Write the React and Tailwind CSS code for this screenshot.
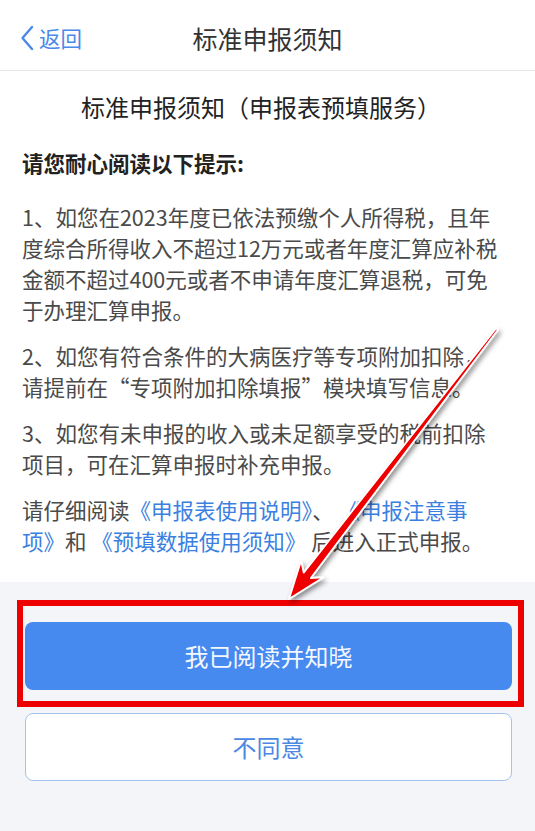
import React from 'react';

const cjk = { fontFamily: '"Noto Sans CJK SC", "Noto Sans", sans-serif' };

const Link = ({ children }) => <span className="text-[#3b80e0]">{children}</span>;

// red annotation arrow drawn over the page
const Arrow = () => (
  <svg
    className="absolute left-0 top-0 pointer-events-none"
    width="535"
    height="831"
    viewBox="0 0 535 831"
  >
    <defs>
      <filter id="shadow" x="-20%" y="-20%" width="140%" height="140%">
        <feDropShadow dx="2" dy="3" stdDeviation="2.5" floodColor="#000" floodOpacity="0.45" />
      </filter>
    </defs>
    <polygon
      points="289,599 323.3,577.4 310.9,578 498,329.7 496.1,328.3 303.7,572.6 301.1,560.4"
      fill="#ee0000"
      stroke="#ffffff"
      strokeWidth="1.8"
      strokeLinejoin="round"
      filter="url(#shadow)"
    />
  </svg>
);

export default function App() {
  return (
    <div className="relative w-[535px] min-h-screen flex flex-col bg-white" style={cjk}>
      {/* header */}
      <div className="grid grid-cols-[1fr_auto_1fr] items-center h-[71px] border-b border-[#e6e6e6] pt-[6px]">
        <div className="flex items-center pl-[20px] gap-[5px] text-[#4a8ae6]">
          <svg width="14" height="26" viewBox="0 0 14 26" fill="none">
            <path d="M12 2 L2.5 13 L12 24" stroke="#4a8ae6" strokeWidth="2.4" strokeLinecap="round" strokeLinejoin="round" />
          </svg>
          <span className="text-[21.5px] leading-none">返回</span>
        </div>
        <div className="text-[25px] text-[#333] leading-none">标准申报须知</div>
        <div />
      </div>

      {/* body */}
      <div className="pl-[22px] pr-[35px] pt-[20px] pb-[26px] text-[#4a4a4a]">
        <h1 className="text-[24px] leading-[32px] text-center text-[#222]">
          标准申报须知（申报表预填服务）
        </h1>
        <p className="mt-[24px] text-[21.5px] leading-[31px] font-bold text-[#222]">
          请您耐心阅读以下提示:
        </p>
        <div className="mt-[23px] flex flex-col gap-[15px] text-[21.5px] leading-[31px]">
          <p>
            1、如您在2023年度已依法预缴个人所得税，且年度综合所得收入不超过12万元或者年度汇算应补税金额不超过400元或者不申请年度汇算退税，可免于办理汇算申报。
          </p>
          <p>2、如您有符合条件的大病医疗等专项附加扣除，请提前在“专项附加扣除填报”模块填写信息。</p>
          <p>3、如您有未申报的收入或未足额享受的税前扣除项目，可在汇算申报时补充申报。</p>
          <p className="whitespace-nowrap">
            请仔细阅读<Link>《申报表使用说明》</Link>、 <Link>《申报注意事</Link>
            <br />
            <Link>项》</Link>和 <Link>《预填数据使用须知》</Link> 后进入正式申报。
          </p>
        </div>
      </div>

      {/* actions */}
      <div className="flex-1 bg-[#f4f5f9] pl-[25px] pr-[23px] pt-[40px] pb-[49px]">
        <div className="relative">
          <button className="w-full h-[68px] rounded-[8px] bg-[#4689ef] text-[24px] text-[#f3f7ff]">
            我已阅读并知晓
          </button>
          <div className="absolute -left-[8px] -right-[12px] -top-[22px] -bottom-[17px] border-[6px] border-[#ee0000] pointer-events-none" />
        </div>
        <button className="mt-[23px] w-full h-[68px] rounded-[8px] bg-white border-[1.5px] border-[#a5c3ec] text-[24px] text-[#4a88e2]">
          不同意
        </button>
      </div>

      <Arrow />
    </div>
  );
}
